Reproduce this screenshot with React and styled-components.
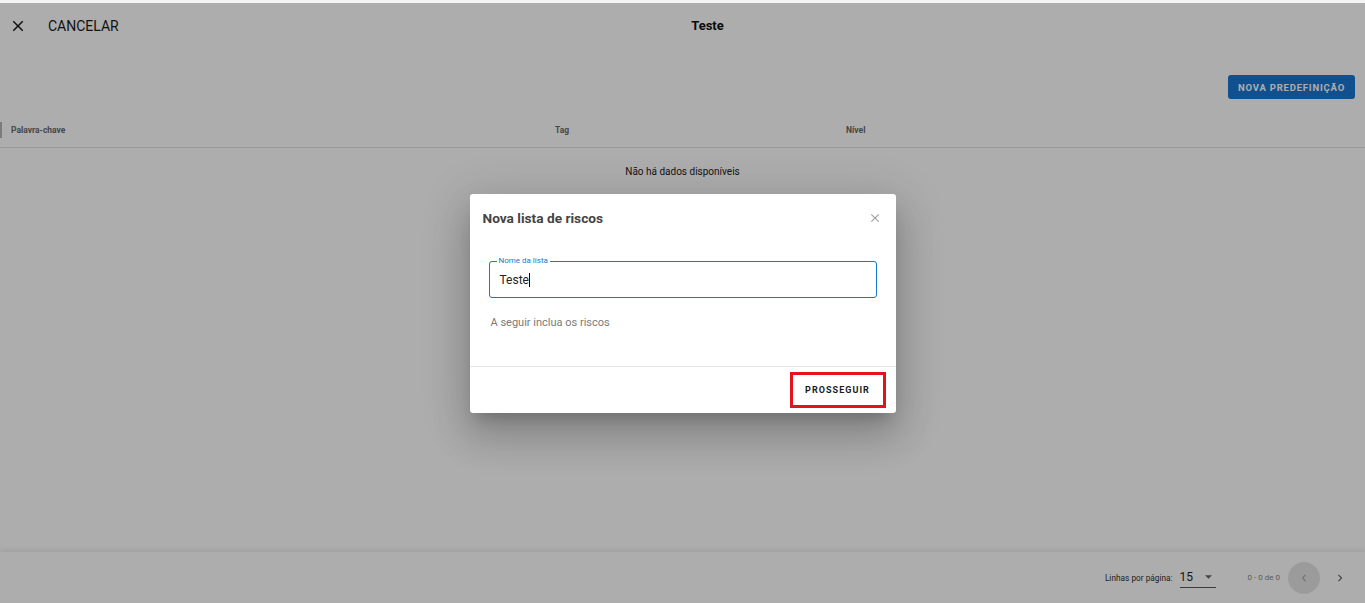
import React from 'react';
import styled, { createGlobalStyle } from 'styled-components';

const GlobalStyle = createGlobalStyle`
    html, body {
        margin: 0;
        padding: 0;
        height: 100%;
        overflow: hidden;
    }
    body {
        font-family: Roboto, "Liberation Sans", sans-serif;
        background: #f3f3f3;
        color: #212121;
    }
`;

const Page = styled.div`
    position: relative;
    margin-top: 3px;
    height: 600px;
    display: flex;
    flex-direction: column;
    background: #fff;
`;

const TopBar = styled.header`
    display: grid;
    grid-template-columns: 200px 1fr 150px;
    align-items: center;
    height: 45px;
`;

const CancelButton = styled.button`
    display: flex;
    align-items: center;
    gap: 21px;
    padding: 0 0 0 9px;
    border: 0 none;
    background: transparent;
    font-family: Roboto, sans-serif;
    font-size: 14px;
    color: #1a1a1a;
    cursor: pointer;
    & svg{
        width: 18px;
        height: 18px;
        fill: #1a1a1a;
    }
`;

const PageTitle = styled.h1`
    margin: 0;
    text-align: center;
    font-size: 13px;
    font-weight: 700;
    color: #111;
`;

const Toolbar = styled.div`
    display: flex;
    justify-content: flex-end;
    padding: 27px 10px 14px 0;
`;

const PrimaryButton = styled.button`
    height: 24px;
    padding: 0 10px;
    border: 0 none;
    border-radius: 3px;
    background: #1976d2;
    color: #fff;
    font-family: Roboto, sans-serif;
    font-size: 9.5px;
    font-weight: 700;
    letter-spacing: 0.8px;
    text-transform: uppercase;
`;

const HeadRow = styled.div`
    display: grid;
    grid-template-columns: 545px 291px 1fr;
    height: 34px;
    align-items: center;
    border-bottom: 1px solid #e0e0e0;
`;

const HeadCell = styled.div`
    font-size: 8.5px;
    font-weight: 700;
    color: #6a6a6a;
    padding-left: ${p => (p.first ? '9px' : '10px')};
    border-left: ${p => (p.first ? '2px solid #b5b5b5' : 'none')};
    line-height: 16px;
`;

const EmptyRow = styled.div`
    height: 47px;
    display: flex;
    align-items: center;
    justify-content: center;
    font-size: 10px;
    color: #222;
`;

const Spacer = styled.div`
    flex: 1;
`;

const Footer = styled.footer`
    height: 51px;
    display: flex;
    align-items: center;
    justify-content: flex-end;
    padding-right: 9px;
    box-shadow: 0 -2px 5px rgba(0, 0, 0, 0.08);
    font-size: 8.3px;
    color: #333;
`;

const RowsLabel = styled.span`
    margin-right: 7px;
`;

const SelectBox = styled.div`
    display: flex;
    align-items: center;
    justify-content: space-between;
    width: 36px;
    height: 20px;
    border-bottom: 1px solid #555;
    font-size: 12px;
    color: #222;
    & svg{
        width: 7px;
        height: 4px;
        margin-right: 4px;
        fill: #666;
    }
`;

const RangeText = styled.span`
    margin-left: 32px;
    margin-right: 8px;
    font-size: 8px;
    color: #888;
`;

const PageButton = styled.button`
    width: 32px;
    height: 32px;
    border-radius: 50%;
    border: 0 none;
    display: flex;
    align-items: center;
    justify-content: center;
    margin-left: ${p => (p.next ? '4px' : '0')};
    background: ${p => (p.active ? 'rgba(0,0,0,0.1)' : 'transparent')};
    & svg{
        width: 14px;
        height: 14px;
        fill: ${p => (p.active ? '#aaa' : '#666')};
    }
`;

const Backdrop = styled.div`
    position: absolute;
    inset: 0;
    background: rgba(0, 0, 0, 0.32);
    display: flex;
    align-items: center;
    justify-content: center;
`;

const Dialog = styled.div`
    width: 426px;
    height: 219px;
    background: #fff;
    border-radius: 3px;
    box-shadow: 0 11px 15px -7px rgba(0,0,0,0.2), 0 24px 38px 3px rgba(0,0,0,0.14), 0 9px 46px 8px rgba(0,0,0,0.12);
    display: flex;
    flex-direction: column;
`;

const DialogHeader = styled.div`
    display: flex;
    align-items: center;
    justify-content: space-between;
    height: 48px;
    padding: 0 14px 0 13px;
`;

const DialogTitle = styled.h2`
    margin: 0;
    font-size: 13.7px;
    font-weight: 700;
    color: #444;
`;

const CloseIcon = styled.svg`
    width: 14px;
    height: 14px;
    fill: #9e9e9e;
`;

const DialogBody = styled.div`
    flex: 1;
    padding: 19px 19px 0 19px;
`;

const Field = styled.fieldset`
    position: relative;
    margin: 0;
    height: 37px;
    padding: 0 10px;
    border: 1px solid #1976d2;
    border-radius: 3px;
    box-sizing: border-box;
    display: flex;
    align-items: center;
    & legend{
        position: absolute;
        top: -6px;
        left: 7px;
        padding: 0 2px;
        background: #fff;
        font-size: 8px;
        color: #1976d2;
        line-height: 10px;
    }
`;

const FieldValue = styled.span`
    font-size: 12px;
    color: #222;
    border-right: 1px solid #000;
    line-height: 14px;
    margin-top: 2px;
`;

const Helper = styled.p`
    margin: 18px 0 0 2px;
    font-size: 11px;
    color: #7a7a7a;
`;

const DialogFooter = styled.div`
    height: 46px;
    border-top: 1px solid #e4e4e4;
    display: flex;
    align-items: center;
    justify-content: flex-end;
    padding-right: 10px;
`;

const TextButton = styled.button`
    width: 96px;
    height: 36px;
    box-sizing: border-box;
    border: 3px solid #e3141b;
    background: #fff;
    font-family: Roboto, sans-serif;
    font-size: 9px;
    font-weight: 700;
    letter-spacing: 1.05px;
    color: #1a1a1a;
    margin-top: 1px;
`;

const closePath = "M19 6.41L17.59 5 12 10.59 6.41 5 5 6.41 10.59 12 5 17.59 6.41 19 12 13.41 17.59 19 19 17.59 13.41 12z";

const App = () => {
    return (
        <>
            <GlobalStyle />
            <Page>
                <TopBar>
                    <CancelButton>
                        <svg viewBox="0 0 24 24"><path d={closePath} /></svg>
                        CANCELAR
                    </CancelButton>
                    <PageTitle>Teste</PageTitle>
                    <div />
                </TopBar>
                <Toolbar>
                    <PrimaryButton>Nova predefinição</PrimaryButton>
                </Toolbar>
                <HeadRow>
                    <HeadCell first>Palavra-chave</HeadCell>
                    <HeadCell>Tag</HeadCell>
                    <HeadCell>Nível</HeadCell>
                </HeadRow>
                <EmptyRow>Não há dados disponíveis</EmptyRow>
                <Spacer />
                <Footer>
                    <RowsLabel>Linhas por página:</RowsLabel>
                    <SelectBox>
                        15
                        <svg viewBox="0 0 10 5"><path d="M0 0l5 5 5-5z" /></svg>
                    </SelectBox>
                    <RangeText>0 - 0 de 0</RangeText>
                    <PageButton active>
                        <svg viewBox="0 0 24 24"><path d="M15.41 7.41L14 6l-6 6 6 6 1.41-1.41L10.83 12z" /></svg>
                    </PageButton>
                    <PageButton next>
                        <svg viewBox="0 0 24 24"><path d="M10 6L8.59 7.41 13.17 12l-4.58 4.59L10 18l6-6z" /></svg>
                    </PageButton>
                </Footer>

                <Backdrop>
                    <Dialog>
                        <DialogHeader>
                            <DialogTitle>Nova lista de riscos</DialogTitle>
                            <CloseIcon viewBox="0 0 24 24"><path d={closePath} /></CloseIcon>
                        </DialogHeader>
                        <DialogBody>
                            <Field>
                                <legend>Nome da lista</legend>
                                <FieldValue>Teste</FieldValue>
                            </Field>
                            <Helper>A seguir inclua os riscos</Helper>
                        </DialogBody>
                        <DialogFooter>
                            <TextButton>PROSSEGUIR</TextButton>
                        </DialogFooter>
                    </Dialog>
                </Backdrop>
            </Page>
        </>
    );
};

export default App;
